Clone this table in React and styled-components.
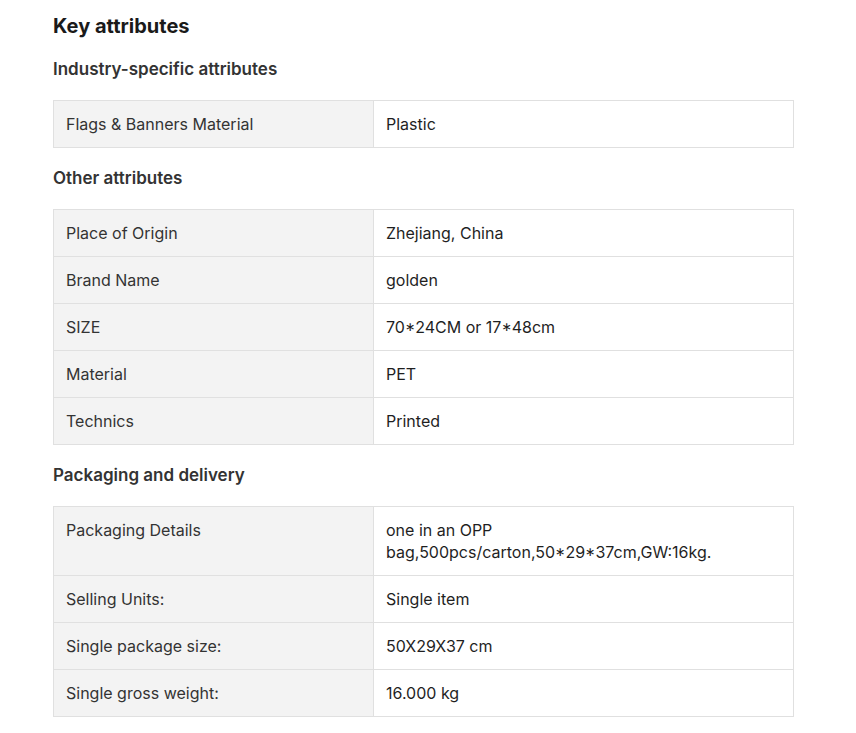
import React from "react";
import styled, { createGlobalStyle } from "styled-components";

const GlobalStyle = createGlobalStyle`
	body {
		margin: 0;
		background: #fff;
		font-family: Inter, "Liberation Sans", sans-serif;
		color: #222;
	}
`;

const Page = styled.div`
	padding: 12px 62px 16px 53px;
	width: 741px;
`;

const Title = styled.h2`
	margin: 0 0 19px;
	font-size: 20px;
	line-height: 28px;
	font-weight: 700;
	color: #1a1a1a;
`;

const SectionTitle = styled.h3`
	margin: ${(p) => (p.first ? "0" : "20px")} 0 20px;
	font-size: 17px;
	line-height: 21px;
	font-weight: 600;
	color: #333;
`;

const Table = styled.div`
	display: grid;
	grid-template-columns: 320px 1fr;
	border-top: 1px solid #e0e0e0;
	border-left: 1px solid #e0e0e0;
`;

const Label = styled.div`
	background: #f3f3f3;
	padding: 12px;
	font-size: 16px;
	line-height: 22px;
	color: #333;
	border-right: 1px solid #e0e0e0;
	border-bottom: 1px solid #e0e0e0;
`;

const Value = styled(Label)`
	background: #fff;
	color: #1f1f1f;
`;

const sections = [
	{
		title: "Industry-specific attributes",
		rows: [["Flags & Banners Material", "Plastic"]],
	},
	{
		title: "Other attributes",
		rows: [
			["Place of Origin", "Zhejiang, China"],
			["Brand Name", "golden"],
			["SIZE", "70*24CM or 17*48cm"],
			["Material", "PET"],
			["Technics", "Printed"],
		],
	},
	{
		title: "Packaging and delivery",
		rows: [
			["Packaging Details", "one in an OPP bag,500pcs/carton,50*29*37cm,GW:16kg."],
			["Selling Units:", "Single item"],
			["Single package size:", "50X29X37 cm"],
			["Single gross weight:", "16.000 kg"],
		],
	},
];

export default function App() {
	return (
		<>
			<GlobalStyle />
			<Page>
				<Title>Key attributes</Title>
				{sections.map((s, i) => (
					<section key={s.title}>
						<SectionTitle first={i === 0}>{s.title}</SectionTitle>
						<Table>
							{s.rows.map(([k, v]) => (
								<React.Fragment key={k}>
									<Label>{k}</Label>
									<Value>{v}</Value>
								</React.Fragment>
							))}
						</Table>
					</section>
				))}
			</Page>
		</>
	);
}
